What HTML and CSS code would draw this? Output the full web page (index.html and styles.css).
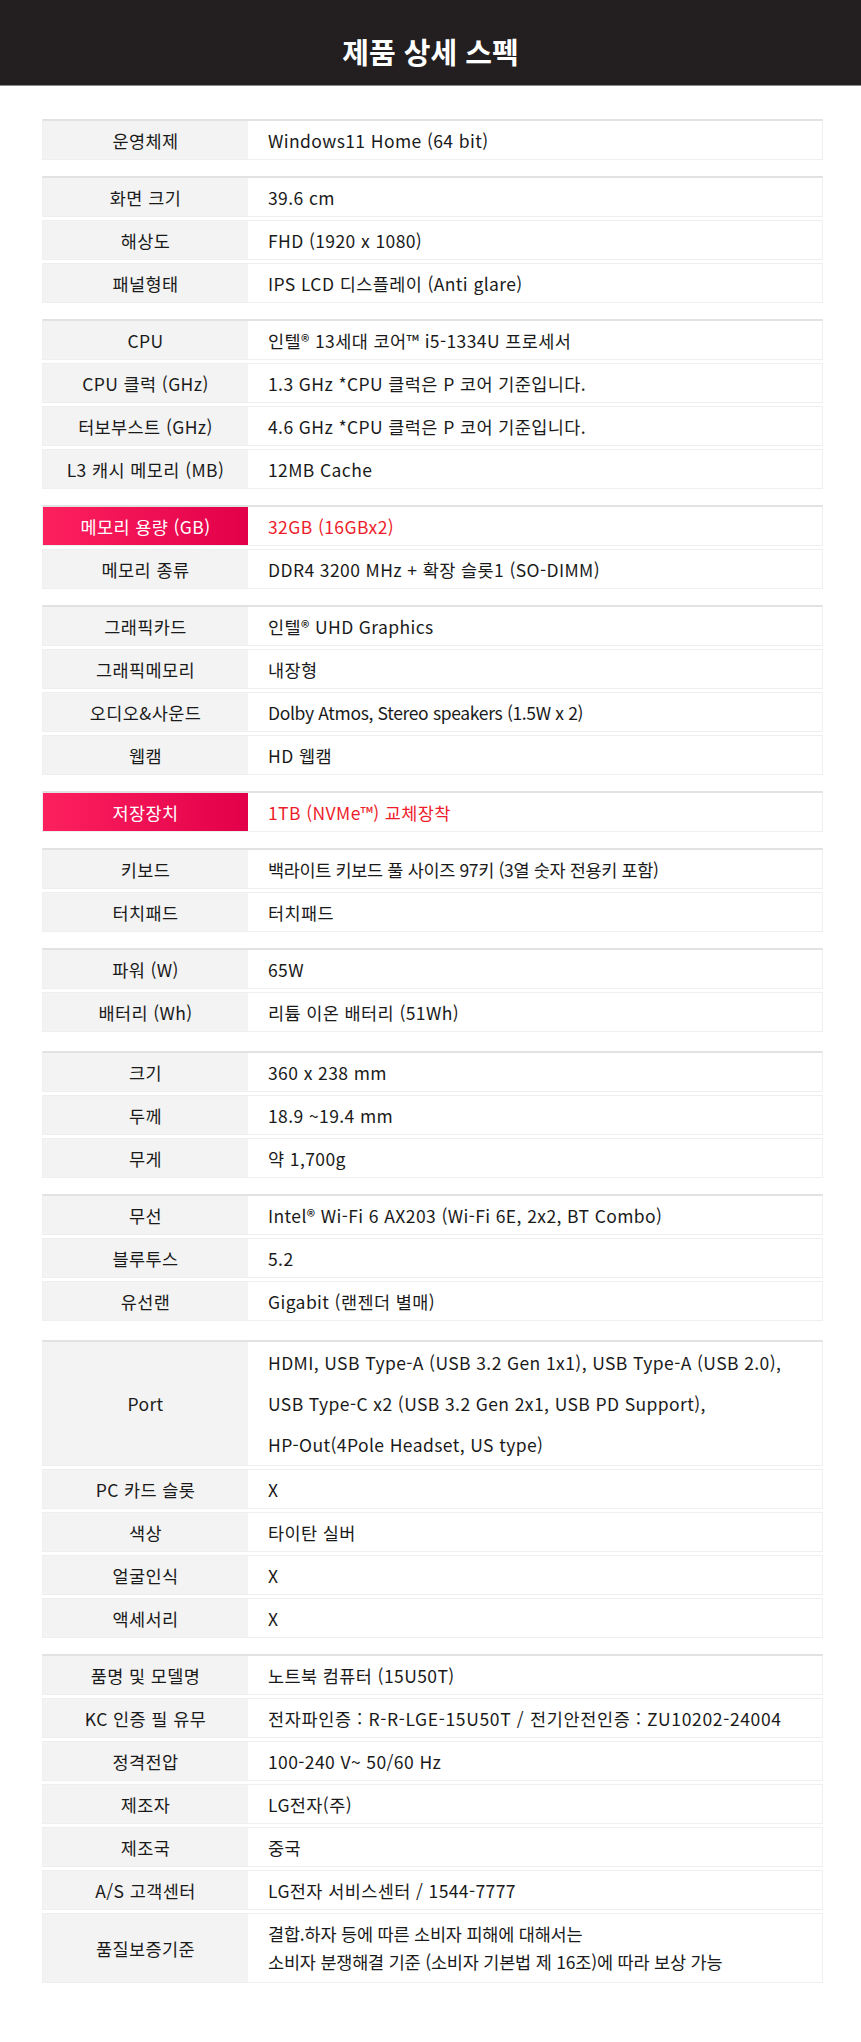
FILE: index.html
```html
<!DOCTYPE html>
<html lang="ko">
<head>
    <meta charset="UTF-8">
    <meta name="viewport" content="width=device-width, initial-scale=1.0">
    <title>제품 상세 스펙</title>
    <link rel="stylesheet" href="styles.css">
</head>
<body>

    <header>
        <h1>제품 상세 스펙</h1>
    </header>

    <main class="spec">
        <div class="group">
            <div class="row"><div class="label">운영체제</div><div class="value">Windows11 Home (64 bit)</div></div>
        </div>

        <div class="group">
            <div class="row"><div class="label">화면 크기</div><div class="value">39.6 cm</div></div>
            <div class="row"><div class="label">해상도</div><div class="value">FHD (1920 x 1080)</div></div>
            <div class="row"><div class="label">패널형태</div><div class="value">IPS LCD 디스플레이 (Anti glare)</div></div>
        </div>

        <div class="group">
            <div class="row"><div class="label">CPU</div><div class="value">인텔® 13세대 코어™ i5-1334U 프로세서</div></div>
            <div class="row"><div class="label">CPU 클럭 (GHz)</div><div class="value">1.3 GHz *CPU 클럭은 P 코어 기준입니다.</div></div>
            <div class="row"><div class="label">터보부스트 (GHz)</div><div class="value">4.6 GHz *CPU 클럭은 P 코어 기준입니다.</div></div>
            <div class="row"><div class="label">L3 캐시 메모리 (MB)</div><div class="value">12MB Cache</div></div>
        </div>

        <div class="group">
            <div class="row hot"><div class="label">메모리 용량 (GB)</div><div class="value">32GB (16GBx2)</div></div>
            <div class="row"><div class="label">메모리 종류</div><div class="value">DDR4 3200 MHz + 확장 슬롯1 (SO-DIMM)</div></div>
        </div>

        <div class="group">
            <div class="row"><div class="label">그래픽카드</div><div class="value">인텔® UHD Graphics</div></div>
            <div class="row"><div class="label">그래픽메모리</div><div class="value">내장형</div></div>
            <div class="row"><div class="label">오디오&amp;사운드</div><div class="value tight">Dolby Atmos, Stereo speakers (1.5W x 2)</div></div>
            <div class="row"><div class="label">웹캠</div><div class="value">HD 웹캠</div></div>
        </div>

        <div class="group">
            <div class="row hot"><div class="label">저장장치</div><div class="value">1TB (NVMe™) 교체장착</div></div>
        </div>

        <div class="group">
            <div class="row"><div class="label">키보드</div><div class="value tight">백라이트 키보드 풀 사이즈 97키 (3열 숫자 전용키 포함)</div></div>
            <div class="row"><div class="label">터치패드</div><div class="value">터치패드</div></div>
        </div>

        <div class="group wide-gap">
            <div class="row"><div class="label">파워 (W)</div><div class="value">65W</div></div>
            <div class="row"><div class="label">배터리 (Wh)</div><div class="value">리튬 이온 배터리 (51Wh)</div></div>
        </div>

        <div class="group">
            <div class="row"><div class="label">크기</div><div class="value">360 x 238 mm</div></div>
            <div class="row"><div class="label">두께</div><div class="value">18.9 ~19.4 mm</div></div>
            <div class="row"><div class="label">무게</div><div class="value">약 1,700g</div></div>
        </div>

        <div class="group wide-gap">
            <div class="row"><div class="label">무선</div><div class="value">Intel® Wi-Fi 6 AX203 (Wi-Fi 6E, 2x2, BT Combo)</div></div>
            <div class="row"><div class="label">블루투스</div><div class="value">5.2</div></div>
            <div class="row"><div class="label">유선랜</div><div class="value">Gigabit (랜젠더 별매)</div></div>
        </div>

        <div class="group">
            <div class="row"><div class="label">Port</div><div class="value lines">HDMI, USB Type-A (USB 3.2 Gen 1x1), USB Type-A (USB 2.0),<br>USB Type-C x2 (USB 3.2 Gen 2x1, USB PD Support),<br>HP-Out(4Pole Headset, US type)</div></div>
            <div class="row"><div class="label">PC 카드 슬롯</div><div class="value">X</div></div>
            <div class="row"><div class="label">색상</div><div class="value">타이탄 실버</div></div>
            <div class="row"><div class="label">얼굴인식</div><div class="value">X</div></div>
            <div class="row"><div class="label">액세서리</div><div class="value">X</div></div>
        </div>

        <div class="group">
            <div class="row"><div class="label">품명 및 모델명</div><div class="value">노트북 컴퓨터 (15U50T)</div></div>
            <div class="row"><div class="label">KC 인증 필 유무</div><div class="value loose">전자파인증 : R-R-LGE-15U50T / 전기안전인증 : ZU10202-24004</div></div>
            <div class="row"><div class="label">정격전압</div><div class="value">100-240 V~ 50/60 Hz</div></div>
            <div class="row"><div class="label">제조자</div><div class="value">LG전자(주)</div></div>
            <div class="row"><div class="label">제조국</div><div class="value">중국</div></div>
            <div class="row"><div class="label">A/S 고객센터</div><div class="value">LG전자 서비스센터 / 1544-7777</div></div>
            <div class="row"><div class="label">품질보증기준</div><div class="value small-lines">결합.하자 등에 따른 소비자 피해에 대해서는<br>소비자 분쟁해결 기준 (소비자 기본법 제 16조)에 따라 보상 가능</div></div>
        </div>
    </main>

</body>
</html>
```

FILE: styles.css
```css
body {
    margin: 0;
    padding: 0;
    background-color: #fff;
    color: #1a1a1a;
    font-family: "Noto Sans CJK KR", sans-serif;
}

header {
    box-sizing: border-box;
    height: 86px;
    padding-top: 34px;
    background-color: #231f20;
    border-bottom: 1px solid #8a8a8a;
    text-align: center;
}

header h1 {
    margin: 0;
    color: #fff;
    font-size: 29px;
    line-height: 34px;
    font-weight: 700;
}

.spec {
    margin: 33px 38px 0 42px;
}

.group {
    margin-bottom: 16px;
}

.group.wide-gap {
    margin-bottom: 19px;
}

.row {
    display: flex;
    margin-top: 3px;
    border: 1px solid #efefef;
    font-size: 17.5px;
    letter-spacing: 0.4px;
}

.group .row:first-child {
    margin-top: 0;
    border-top: 2px solid #e2e2e2;
}

.label {
    flex: 0 0 205px;
    display: flex;
    align-items: center;
    justify-content: center;
    min-height: 38px;
    background-color: #f3f3f3;
    text-align: center;
}

.value {
    flex: 1;
    display: flex;
    align-items: center;
    padding-left: 20px;
    min-height: 38px;
}

.value.tight {
    letter-spacing: -0.35px;
}

.value.loose {
    letter-spacing: 0.65px;
}

.value.lines {
    display: block;
    line-height: 41px;
}

.value.small-lines {
    display: block;
    padding: 6px 0 6px 20px;
    line-height: 28px;
    letter-spacing: -0.2px;
}

.hot .label {
    color: #fff;
    background: linear-gradient(to right, #fd205e, #e2004a);
}

.hot .value {
    color: #ee1d2b;
}
```
